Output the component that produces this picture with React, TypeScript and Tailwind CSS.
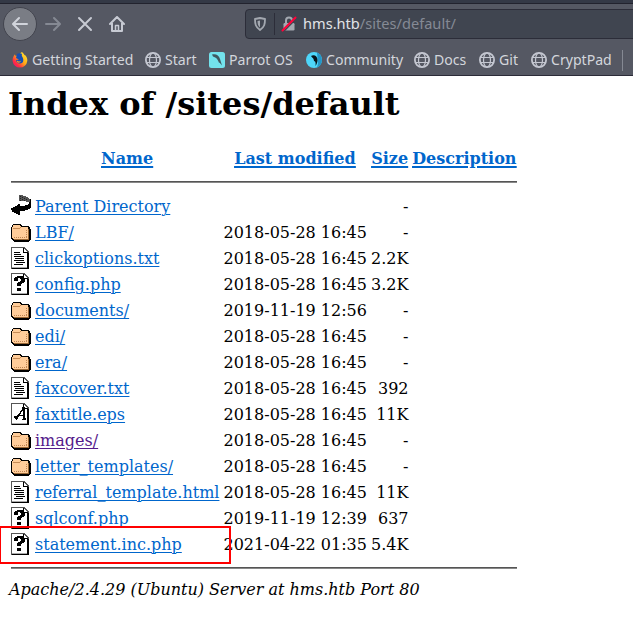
import React from "react";

type Kind = "back" | "folder" | "text" | "unknown" | "eps";
type Row = { kind: Kind; name: string; date?: string; size: string; visited?: boolean };

const D = "2018-05-28 16:45";
const rows: Row[] = [
  { kind: "back", name: "Parent Directory", size: "-" },
  { kind: "folder", name: "LBF/", date: D, size: "-" },
  { kind: "text", name: "clickoptions.txt", date: D, size: "2.2K" },
  { kind: "unknown", name: "config.php", date: D, size: "3.2K" },
  { kind: "folder", name: "documents/", date: "2019-11-19 12:56", size: "-" },
  { kind: "folder", name: "edi/", date: D, size: "-" },
  { kind: "folder", name: "era/", date: D, size: "-" },
  { kind: "text", name: "faxcover.txt", date: D, size: "392" },
  { kind: "eps", name: "faxtitle.eps", date: D, size: "11K" },
  { kind: "folder", name: "images/", date: D, size: "-", visited: true },
  { kind: "folder", name: "letter_templates/", date: D, size: "-" },
  { kind: "text", name: "referral_template.html", date: D, size: "11K" },
  { kind: "unknown", name: "sqlconf.php", date: "2019-11-19 12:39", size: "637" },
  { kind: "unknown", name: "statement.inc.php", date: "2021-04-22 01:35", size: "5.4K" },
];

function Page() {
  return (
    <>
      <path d="M0 0H13L18 5V22H0Z" fill="#555" />
      <path d="M1 1H12V6H16V20H1Z" fill="#fff" />
      <path d="M13 2L16 5H13Z" fill="#fff" />
      <path d="M12 1h1v4h4v1h-5zM16 6h2v16H1v-2h15z" fill="#000" />
      <path d="M1 20h15v1H1z" fill="#aaa" />
    </>
  );
}

function FileIcon({ kind }: { kind: Kind }) {
  return (
    <svg className="h-[22px] w-5 shrink-0" viewBox="0 0 20 22" shapeRendering="crispEdges">
      {kind === "back" && (
        <>
          <path d="M8 0h4v1h3v1h2v1h1v1h1v4h-1v-1h-3V6H8z" fill="#555" />
          <path d="M9 1h1M11 2h1M9 3h1M13 3h1M11 4h1M15 4h1M9 5h1M13 5h1" stroke="#222" />
          <path d="M20 4v9h-1v1h-2v1h-3v1H9v4H7v-1H5v-1H3v-1H1v-2H0v-2h2v-1h2v-1h2v-1h1V9h2v2h5v-1h3V9h1V7h1V4z" fill="#000" />
        </>
      )}
      {kind === "folder" && (
        <>
          <path d="M2 3h8v1h1v1h7v1h1v2h1v11h-1v1h-1v1H3v-1H2v-1H1v-1H0V6h1V4h1z" fill="#000" />
          <path d="M2 4h7v1h1v1h7v12H2v-1H1V6h1z" fill="#ffcc99" />
          <path d="M17 8h1v11H3v-1h14z" fill="#996633" />
          <path d="M2 7.500h7M9.500 6v1" fill="none" stroke="#c48a55" />
          <path d="M3 16.500h13M15.500 9v7" fill="none" stroke="#bd8552" strokeDasharray="1 1" />
        </>
      )}
      {(kind === "text" || kind === "unknown" || kind === "eps") && <Page />}
      {kind === "text" && <path d="M3 5.500h6M3 7.500h7M3 9.500h10M4 11.500h9M3 13.500h10M5 15.500h9M3 17.500h9" stroke="#000" />}
      {kind === "unknown" && (
        <path d="M4 4h2V3h6v1h1v1h1v4h-1v1h-2v1h-1v2H6v-3h1V9h2V8h1V6H9V5H7v3H3V5h1zM6 15h4v3H6z" fill="#000" />
      )}
      {kind === "eps" && (
        <path fillRule="evenodd" d="M11 4h3v11h1v2h-4v-1h1v-3H8v1H7v2H6v1H5v-1H4v-1H3v-2h3v-1h1v-1h1v-1h1V8h1V7h1zM11 8h1v4H9v-1h1V9h1z" fill="#000" />
      )}
    </svg>
  );
}

function Globe() {
  return (
    <svg className="size-4 shrink-0" viewBox="0 0 16 16" fill="none" stroke="#c4c7d1">
      <circle cx="8" cy="8" r="7.1" strokeWidth="1.8" />
      <ellipse cx="8" cy="8" rx="3.5" ry="7" strokeWidth="1.2" />
      <path d="M1.500 5.500h13M1.500 10.500h13" strokeWidth="1.2" />
    </svg>
  );
}

function Firefox() {
  return (
    <svg className="size-4 shrink-0" viewBox="0 0 16 16">
      <defs>
        <linearGradient id="flame" x1="1" y1="0" x2="0" y2="1">
          <stop offset="0" stopColor="#fff13f" />
          <stop offset=".45" stopColor="#ffad15" />
          <stop offset=".75" stopColor="#ff2846" />
          <stop offset="1" stopColor="#e5107c" />
        </linearGradient>
      </defs>
      <path d="M10 0c1 1 2 2 2.700 3.300L13 3c2 2 2.500 4 2.300 6A7.400 7.400 0 0 1 .6 9C.4 6.400 1.200 4.500 3 2.300c0 .8.200 1.200.6 1.500C5 3.500 6 3.600 7 4c0-2 1.500-3 3-4Z" fill="url(#flame)" />
      <path d="M5 2C7 .8 9 1 10 2c-1 2 1.500 3.500 1.300 6.200 0 2.200-1.500 3.300-3.500 3.300-2.500 0-3.800-2-3.600-3.500l2.800-.6L4 6z" fill="#164fb3" />
      <path d="M5 8.500c1 1 2.500 1.600 4 .3-.6 2-2.700 2.500-4 1.200z" fill="#ff9e18" />
    </svg>
  );
}

function Parrot({ round = false }: { round?: boolean }) {
  return (
    <svg className="size-4 shrink-0" viewBox="0 0 16 16">
      <rect width="16" height="16" rx={round ? 8 : 2.5} fill={round ? "#4ed6fa" : "#73e2ec"} />
      {round ? (
        <>
          <path d="M11 .6a8 8 0 0 1 0 14.800l1-4z" fill="#2496c8" />
          <path d="M5 4c3-2 6.500 0 6.500 4 0 2-.6 4-2 6 .4-3 0-4-.8-5L8 9.500C8 8 7.500 6.500 6.200 5.600z" fill="#07151c" />
        </>
      ) : (
        <path d="M3 2.500c4-1 7 1 8 4.500l2 6.500-2.500-3-.4.500C9 8 8 6.200 6.200 5.400L4 4.500z" fill="#3f5860" />
      )}
    </svg>
  );
}

function Bookmark({ label, icon, className }: { label: string; icon: React.ReactNode; className: string }) {
  return (
    <div className={`flex shrink-0 items-center gap-1 ${className}`}>
      {icon}
      <span className="-mt-px whitespace-nowrap">{label}</span>
    </div>
  );
}

function Browser() {
  return (
    <header className="h-[76px] overflow-hidden border-b border-[#2b2b38] bg-[#555863] font-['Noto_Sans',sans-serif] text-[#d3d6dc]">
      <div className="h-1 border-b border-[#22232e] bg-[#343946]" />
      <div className="flex h-10 items-center">
        <div className="ml-[3px] flex size-[34px] shrink-0 items-center justify-center rounded-full border border-[#42444e] bg-[#7a7d85]">
          <svg className="size-4" viewBox="0 0 16 16" fill="none" stroke="#d1d4db" strokeWidth="2" strokeLinecap="round" strokeLinejoin="round">
            <path d="M15 8H1.500M7 2L1 8l6 6" />
          </svg>
        </div>
        <svg className="ml-2 size-4 shrink-0" viewBox="0 0 16 16" fill="none" stroke="#858993" strokeWidth="2" strokeLinecap="round" strokeLinejoin="round">
          <path d="M1 8h13.500M9 2l6 6-6 6" />
        </svg>
        <svg className="ml-4 size-4 shrink-0" viewBox="0 0 16 16" stroke="#c7cad3" strokeWidth="2" strokeLinecap="round">
          <path d="M2 2l12 12M14 2L2 14" />
        </svg>
        <svg className="ml-4 size-4 shrink-0" viewBox="0 0 16 16" fill="none" stroke="#c7cad3" strokeWidth="2" strokeLinecap="round" strokeLinejoin="round">
          <path d="M1 8l7-7 7 7M3 7v8h10V7" />
          <path d="M6.500 14V9.500h3V14" strokeWidth="1.500" />
        </svg>
        <div className="ml-[120px] flex h-[30px] w-[400px] shrink-0 items-center rounded-l border border-[#2c2d39] bg-[#404550]">
          <svg className="ml-[6px] size-4" viewBox="0 0 16 16" fill="none" stroke="#a3a8b0" strokeWidth="1.8" strokeLinejoin="round">
            <path d="M8 2l5 1c0 5-.5 8-5 11-4.500-3-5-6-5-11z" />
            <path d="M8 4.500v7C6 10 5.500 8 5.500 5z" fill="#a3a8b0" stroke="none" />
          </svg>
          <i className="ml-[6px] h-[22px] w-px bg-[#2c2d39]" />
          <svg className="ml-[6px] size-4" viewBox="0 0 16 16">
            <path d="M5 7V4.500a3 3 0 0 1 6 0V7" fill="none" stroke="#a3a8b0" strokeWidth="2" />
            <rect x="2.500" y="7" width="11" height="7.500" rx="1.200" fill="#a3a8b0" />
            <path d="M2.500 15.500L15.500 2.500" stroke="#404550" strokeWidth="1.500" />
            <path d="M1.500 14.500L14.500 1.500" stroke="#ff0039" strokeWidth="2" strokeLinecap="round" />
          </svg>
          <span className="ml-[6px] text-[14.600px] text-[#e1e3e7]">hms.htb<span className="text-[#858a95]">/sites/default/</span></span>
        </div>
      </div>
      <div className="flex h-8 items-center text-[14.1px]">
        <Bookmark className="ml-3 w-[133px]" label="Getting Started" icon={<Firefox />} />
        <Bookmark className="w-16" label="Start" icon={<Globe />} />
        <Bookmark className="w-[97px]" label="Parrot OS" icon={<Parrot />} />
        <Bookmark className="w-[108px]" label="Community" icon={<Parrot round />} />
        <Bookmark className="w-[65px]" label="Docs" icon={<Globe />} />
        <Bookmark className="w-[52px]" label="Git" icon={<Globe />} />
        <Bookmark className="w-[91px]" label="CryptPad" icon={<Globe />} />
        <i className="h-[21px] w-px bg-[#858993]" />
      </div>
    </header>
  );
}

const link = "underline decoration-1 underline-offset-2";
const Rule = () => <div className="ml-[3px] h-[2px] w-[506px] border-t border-[#555] bg-[#888]" />;

export default function App() {
  return (
    <div className="h-[627px] w-[633px] overflow-hidden bg-white text-black">
      <Browser />
      <main className="relative pl-2 font-['DejaVu_Serif',serif] text-base">
        <h1 className="h-[68px] pt-[9px] text-[32px] leading-[38px] font-bold">Index of /sites/default</h1>
        <div className="flex h-[37px] pt-[5px] leading-[19px] font-bold text-[#0066cc] underline decoration-2 underline-offset-2">
          <a className="ml-[93px] w-[133.2px]">Name</a>
          <a className="w-[137px]">Last modified</a>
          <a className="w-[41px]">Size</a>
          <a>Description</a>
        </div>
        <Rule />
        <div className="pt-[10px]">
          {rows.map((row) => (
            <div key={row.name} className="flex h-[26px] items-center pl-[3px] leading-[19px]">
              <FileIcon kind={row.kind} />
              <a className={`ml-1 w-[188.5px] whitespace-nowrap ${link} ${row.visited ? "text-[#551a8b]" : "text-[#0066cc]"}`}>{row.name}</a>
              <span className="w-36 whitespace-nowrap">{row.date}</span>
              <span className="w-[41px] text-right">{row.size}</span>
            </div>
          ))}
        </div>
        <div className="pt-[10px]"><Rule /></div>
        <address className="pt-[11px] pl-px leading-[19px] italic">Apache/2.4.29 (Ubuntu) Server at hms.htb Port 80</address>
        <div className="absolute top-[450px] -left-px h-[38px] w-[232px] border-2 border-[#ff0000]" />
      </main>
    </div>
  );
}
